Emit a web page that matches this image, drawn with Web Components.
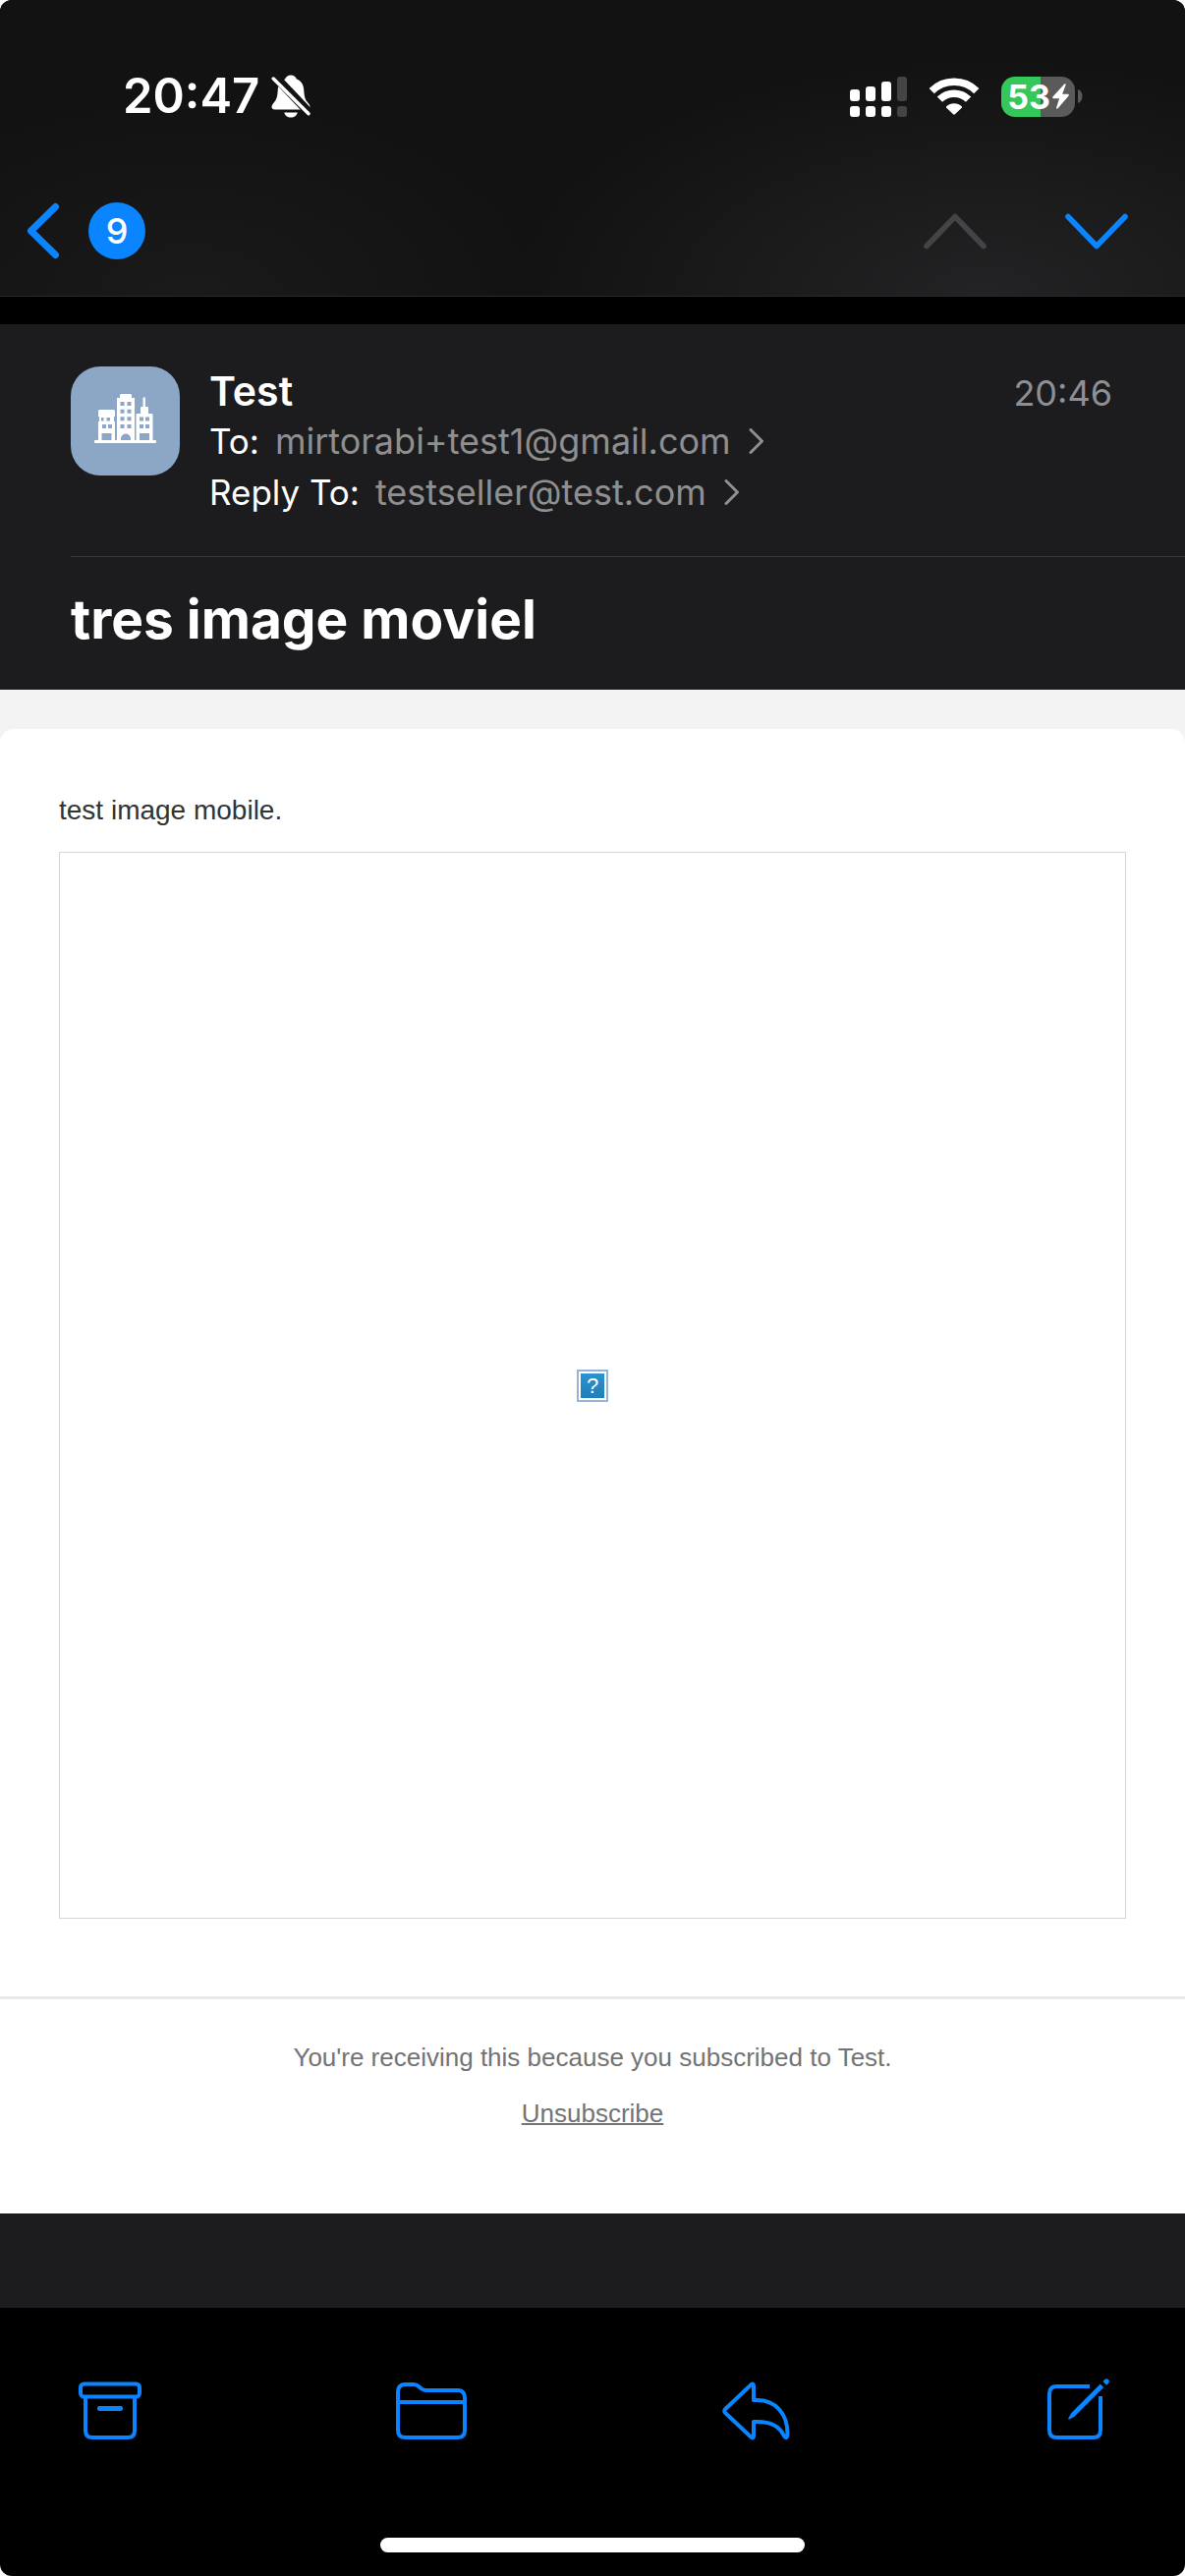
<!DOCTYPE html>
<html lang="en">
<head>
<meta charset="utf-8">
<meta name="viewport" content="width=device-width, initial-scale=1">
<title>Mail</title>
<style>
  body { margin: 0; background: #fff; font-family: Inter, "Liberation Sans", sans-serif; }
</style>
</head>
<body>
<mail-app>
  <status-bar slot="top" time="20:47" battery="53"></status-bar>
  <nav-bar slot="top" unread="9"></nav-bar>
  <message-header>
    <span slot="name">Test</span>
    <time slot="time">20:46</time>
    <address-row label="To:">mirtorabi+test1@gmail.com</address-row>
    <address-row label="Reply To:">testseller@test.com</address-row>
    <span slot="subject">tres image moviel</span>
  </message-header>
  <message-body>
    test image mobile.
    <missing-image slot="picture"></missing-image>
    <span slot="reason">You're receiving this because you subscribed to Test.</span>
    <span slot="action">Unsubscribe</span>
  </message-body>
  <tool-bar slot="bottom"></tool-bar>
</mail-app>

<script>
const RESET = `
  *, *::before, *::after { box-sizing: border-box; }
  button { appearance: none; border: 0; margin: 0; padding: 0; background: none; color: inherit; font: inherit; display: flex; align-items: center; cursor: pointer; }
  a { color: inherit; text-decoration: none; }
`;

function define(name, render) {
  customElements.define(name, class extends HTMLElement {
    constructor() {
      super();
      this.attachShadow({ mode: "open" });
    }
    connectedCallback() {
      this.shadowRoot.innerHTML = `<style>${RESET}</style>` + render(this);
    }
  });
}

const ICONS = {
  bell: [40, 44, `
    <path fill="currentColor" d="M20 0.5c-3 0-5.2 1.7-5.9 4.1C9.300 6.300 7 10.500 6.700 16c-.3 6-1.200 9.500-4 12.500C1.200 30.200.5 31.300.5 32.800.5 34.600 1.800 35.500 3.600 35.500h32.800c1.800 0 3.100-.9 3.100-2.700 0-1.500-.7-2.600-2.200-4.300-2.800-3-3.700-6.500-4-12.500-.3-5.500-2.600-9.700-7.400-11.400C25.200 2.200 23 .5 20 .5z"/>
    <path fill="currentColor" d="M13.200 38.500h13.600c-.7 3-3.400 5-6.800 5s-6.100-2-6.800-5z"/>
    <path d="M3.500 1.500 40 40" stroke="#131313" stroke-width="9"/>
    <path d="M2.200 4 38 39.800" stroke="currentColor" stroke-width="3.400" stroke-linecap="round"/>`],
  signal: [58, 41, `
    <g fill="currentColor"><rect y="13" width="10" height="12" rx="3"/><rect x="16" y="10" width="10" height="15" rx="3"/><rect x="32" y="5" width="10" height="20" rx="3"/>
    <rect y="30" width="10" height="11" rx="3"/><rect x="16" y="30" width="10" height="11" rx="3"/><rect x="32" y="30" width="10" height="11" rx="3"/></g>
    <g fill="#444445"><rect x="48" width="10" height="25" rx="3"/><rect x="48" y="30" width="10" height="11" rx="3"/></g>`],
  wifi: [52, 38, `
    <g fill="none" stroke="currentColor" stroke-width="7.500"><path d="M3.200 13.600a32.500 32.500 0 0 1 45.600 0"/><path d="M11.400 22.200a20.800 20.800 0 0 1 29.200 0"/></g>
    <path fill="currentColor" d="M18.200 29.300a11.200 11.200 0 0 1 15.600 0c.5.500.5 1 0 1.500l-6.900 6.500c-.6.600-1.200.6-1.800 0l-6.900-6.500c-.5-.5-.5-1 0-1.500z"/>`],
  bolt: [17, 26, `<path fill="currentColor" d="M12.300.6.600 13.300c-.8.900-.4 1.900.8 1.900h5.700l-3 9.300c-.3 1.100.8 1.700 1.600.8L16.400 12.700c.8-.9.300-1.900-.8-1.900H10.100L13.600 1.400c.4-1-.5-1.600-1.300-.8z"/>`],
  nub: [5, 14, `<path fill="#5a5a5b" d="M0 0c3 1 4.500 4 4.500 7S3 13 0 14z"/>`],
  back: [34, 58, `<path d="M29.500 4.500 4.500 29l25 24.500" fill="none" stroke="currentColor" stroke-width="7" stroke-linecap="round" stroke-linejoin="round"/>`],
  up: [64, 37, `<path d="M3 33.500 32 3.500l29 30" fill="none" stroke="currentColor" stroke-width="5.600" stroke-linecap="round" stroke-linejoin="round"/>`],
  down: [64, 37, `<path d="M3 3.500 32 33.500 61 3.500" fill="none" stroke="currentColor" stroke-width="5.600" stroke-linecap="round" stroke-linejoin="round"/>`],
  more: [16, 26, `<path d="M2 1.500 13.500 13 2 24.500" fill="none" stroke="currentColor" stroke-width="3" stroke-linecap="round" stroke-linejoin="round"/>`],
  city: [64, 50, `
    <g fill="#fff"><rect y="47" width="63" height="3" rx="1"/>
    <path fill-rule="evenodd" d="M23 48V4h3V1.500Q26 0 27.500 0h9Q38 0 38 1.500V4h3v44zM26.500 8v4h4V8zm7 0v4h4V8zm-7 7.700v4h4v-4zm7 0v4h4v-4zm-7 7.600v4h4v-4zm7 0v4h4v-4zm-7 7.700v4h4v-4zm7 0v4h4v-4zM27 48h10v-2.500a5 5 0 0 0-10 0z"/>
    <path fill-rule="evenodd" d="M4 48V28h1v-5H4v-5.500Q4 16 5.500 16h14Q21 16 21 17.500V23h-1v5h1v20zM7 24v3.500h2.500V24zm5.500 0v3.500H16V24zM8 31v4h4v-4zm6 0v4h4v-4zM7.500 40v7.500h10V40z"/>
    <path fill-rule="evenodd" d="M42.500 48V21q0-1 1-1H47v-6q0-1 1-1h1.500V4.500a1.200 1.200 0 0 1 2.400 0V13H54q1 0 1 1v6h3.500q1 0 1 1v27zM46 23.500v4h4v-4zm6 0v4h4v-4zM46 31v4h4v-4zm6 0v4h4v-4zM46 40v7.500h10V40z"/></g>`],
  archive: [64, 64, `
    <g fill="none" stroke="currentColor" stroke-width="4" stroke-linejoin="round"><rect x="2" y="6.500" width="60" height="13" rx="3.500"/>
    <path d="M7 19.500V54q0 7 7 7h36q7 0 7-7V19.500"/></g><rect x="19" y="29" width="26" height="5" rx="2.200" fill="currentColor"/>`],
  folder: [72, 64, `
    <g fill="none" stroke="currentColor" stroke-width="4" stroke-linejoin="round"><path d="M2 53.500V14.500Q2 7 9.500 7H18q3 0 5 2l3 2.500Q28 13 31 13h31.500Q70 13 70 20.500v33Q70 61 62.500 61h-53Q2 61 2 53.500z"/><path d="M3 25h66"/></g>`],
  reply: [72, 64, `
    <path fill="none" stroke="currentColor" stroke-width="4" stroke-linejoin="round" d="M29.500 7.200c1.300-1.100 2.500-.7 2.500 1V23h3.500C54 23 66.500 36.500 66.500 57c0 5-2.300 5.300-4 1.500C57.500 48.500 48 45 36 45h-4v14.800c0 1.700-1.200 2.100-2.500 1L3.200 36c-1.300-1.300-1.300-2.700 0-4z"/>`],
  compose: [64, 64, `
    <path d="M43 9H9.500Q2 9 2 16.500v37Q2 61 9.500 61h37q7.500 0 7.500-7.500V19" fill="none" stroke="currentColor" stroke-width="4"/>
    <path d="M57.500 5.500 20 43" stroke="#000" stroke-width="11"/>
    <path fill="currentColor" d="M53.800 6.600 57.200 10 27.500 39.700 22.300 42.600q-1.500.5-1-1L24.100 36.300zM56.400 4l1.900-1.900q2-1.800 3.800 0t0 3.800L60.200 7.800z"/>`]
};

define("ui-icon", el => {
  const [w, h, body] = ICONS[el.getAttribute("name")];
  return `<style>:host { display: block; flex: none; } svg { display: block; }</style>
    <svg width="${w}" height="${h}" viewBox="0 0 ${w} ${h}" aria-hidden="true">${body}</svg>`;
});

define("mail-app", () => `
  <style>
    :host { display: flex; flex-direction: column; min-height: 100vh; background: #000; border-radius: 12px; overflow: hidden; }
    header { border-bottom: 1px solid #2a2a2b; background:
      radial-gradient(ellipse 480px 240px at 83% 100%, #232325, transparent),
      radial-gradient(ellipse 360px 200px at 16% 100%, #1a1a1b, transparent), #121212; }
    main { flex: 1; margin-top: 28px; padding-bottom: 96px; background: #1c1c1e; }
  </style>
  <header><slot name="top"></slot></header>
  <main><slot></slot></main>
  <slot name="bottom"></slot>`);

define("status-bar", el => `
  <style>
    :host { display: flex; justify-content: space-between; align-items: center; padding: 68px 104px 0 125px; color: #fff; line-height: 60px; }
    div { display: flex; align-items: center; }
    .time { gap: 12px; font-size: 49px; font-weight: 600; }
    .state { gap: 22px; }
    .power { gap: 3px; }
    .battery { width: 75px; height: 41px; justify-content: center; gap: 2px; border-radius: 14px; font-size: 34px; line-height: 41px; font-weight: 700;
      background: linear-gradient(90deg, #34c759 ${el.getAttribute("battery")}%, #5a5a5b 0); }
  </style>
  <div class="time"><span>${el.getAttribute("time")}</span><ui-icon name="bell"></ui-icon></div>
  <div class="state">
    <ui-icon name="signal"></ui-icon>
    <ui-icon name="wifi"></ui-icon>
    <div class="power">
      <div class="battery"><span>${el.getAttribute("battery")}</span><ui-icon name="bolt"></ui-icon></div>
      <ui-icon name="nub"></ui-icon>
    </div>
  </div>`);

define("nav-bar", el => `
  <style>
    :host { display: flex; justify-content: space-between; align-items: center; padding: 78px 58px 37px 27px; color: #0a84ff; }
    nav { display: flex; align-items: center; gap: 80px; }
    .back { gap: 29px; }
    .count { width: 58px; height: 58px; border-radius: 50%; background: #0a84ff; color: #fff; font-size: 36px; line-height: 58px; text-align: center; font-weight: 500; }
    button:disabled { color: #444446; }
  </style>
  <button class="back" aria-label="Back to mailbox"><ui-icon name="back"></ui-icon><span class="count">${el.getAttribute("unread")}</span></button>
  <nav>
    <button disabled aria-label="Previous message"><ui-icon name="up"></ui-icon></button>
    <button aria-label="Next message"><ui-icon name="down"></ui-icon></button>
  </nav>`);

define("message-header", () => `
  <style>
    :host { display: block; padding-left: 72px; color: #fff; }
    .sender { display: flex; gap: 30px; padding: 43px 74px 39px 0; border-bottom: 1px solid #3a3a3c; }
    .avatar { display: flex; flex: none; align-items: center; justify-content: center; width: 111px; height: 111px; border-radius: 30px; background: #8ca6c6; padding-bottom: 6px; }
    .details { flex: 1; }
    .first { display: flex; justify-content: space-between; align-items: baseline; line-height: 50px; }
    .name { font-size: 41px; font-weight: 600; }
    .when { font-size: 36px; line-height: 46px; color: #8e8e93; }
    h1 { margin: 0; padding: 28px 0 37px; font-size: 55px; line-height: 70px; font-weight: 700; }
  </style>
  <div class="sender">
    <div class="avatar"><ui-icon name="city"></ui-icon></div>
    <div class="details">
      <div class="first"><span class="name"><slot name="name"></slot></span><span class="when"><slot name="time"></slot></span></div>
      <slot></slot>
    </div>
  </div>
  <h1><slot name="subject"></slot></h1>`);

define("address-row", el => `
  <style>
    :host { display: flex; align-items: center; gap: 16px; font-size: 36px; line-height: 52px; }
    .label { font-size: 35px; }
    a { display: flex; align-items: center; gap: 18px; color: #8f8f90; }
  </style>
  <span class="label">${el.getAttribute("label")}</span>
  <a href="#"><span><slot></slot></span><ui-icon name="more"></ui-icon></a>`);

define("message-body", () => `
  <style>
    :host { display: block; padding-top: 40px; background: #f3f3f3; font-family: "Liberation Sans", Arial, sans-serif; }
    article { background: #fff; border-radius: 14px 14px 0 0; }
    .content { padding: 61px 60px 79px; }
    p { margin: 0; }
    .content p { margin-bottom: 20px; font-size: 28px; line-height: 44px; color: #333; }
    footer { display: flex; flex-direction: column; align-items: center; gap: 19px; padding: 40px 60px 83px; border-top: 3px solid #e9e9e9; font-size: 26px; line-height: 38px; color: #737373; }
    a { text-decoration: underline; text-decoration-thickness: 2px; }
  </style>
  <article>
    <div class="content"><p><slot></slot></p><slot name="picture"></slot></div>
    <footer><p><slot name="reason"></slot></p><a href="#"><slot name="action"></slot></a></footer>
  </article>`);

define("missing-image", () => `
  <style>
    :host { display: flex; align-items: center; justify-content: center; box-sizing: border-box; aspect-ratio: 1; border: 1px solid #d6d6d6; }
    .mark { width: 32px; height: 33px; border: 2px solid #97b3d8; background: linear-gradient(#2b93cf, #1f7fb9) content-box, #fff; padding: 2px; color: #fff; font: 400 22px/25px "Liberation Sans", Arial, sans-serif; text-align: center; }
  </style>
  <div class="mark">?</div>`);

define("tool-bar", () => `
  <style>
    :host { display: block; padding: 71px 0 24px; color: #0a84ff; }
    nav { display: flex; justify-content: space-between; padding: 0 76px 0 80px; }
    .home { width: 432px; height: 15px; margin: 99px auto 0; border-radius: 8px; background: #fff; }
  </style>
  <nav>
    <button aria-label="Archive"><ui-icon name="archive"></ui-icon></button>
    <button aria-label="Move to folder"><ui-icon name="folder"></ui-icon></button>
    <button aria-label="Reply"><ui-icon name="reply"></ui-icon></button>
    <button aria-label="Compose"><ui-icon name="compose"></ui-icon></button>
  </nav>
  <div class="home"></div>`);
</script>
</body>
</html>
